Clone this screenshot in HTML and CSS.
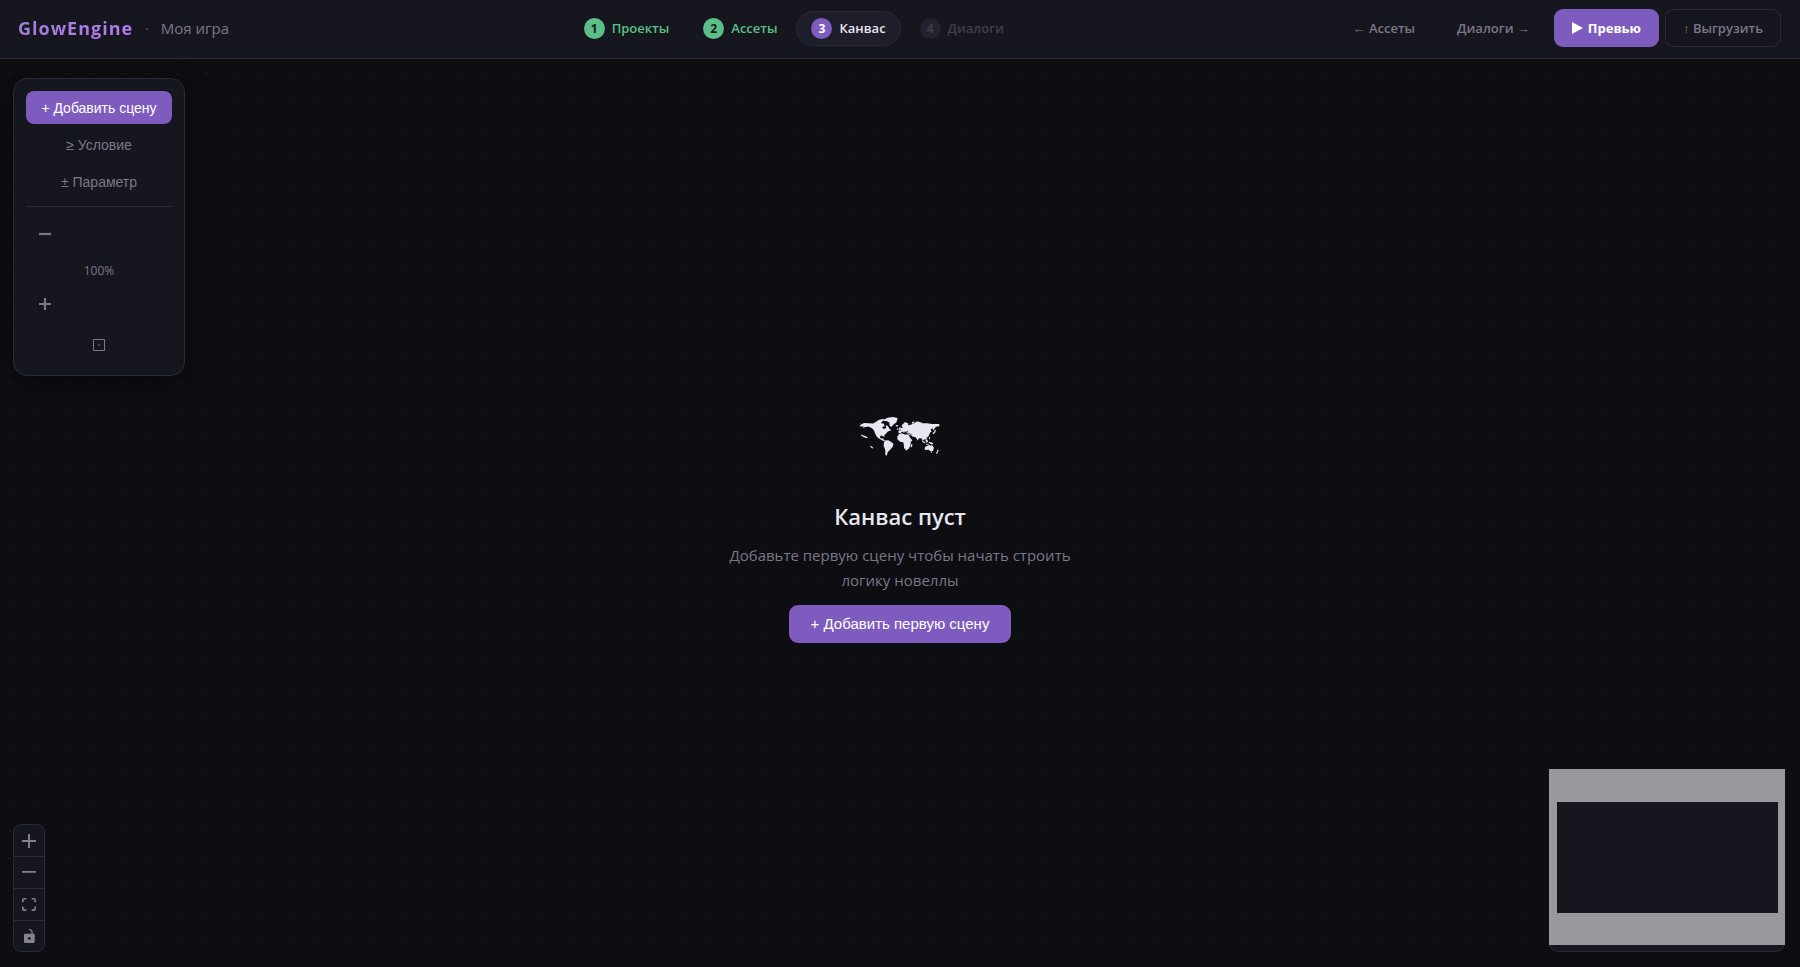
FILE: index.html
```html
<!DOCTYPE html>
<html lang="ru">
<head>
<meta charset="utf-8">
<title>GlowEngine</title>
<link rel="stylesheet" href="styles.css">
</head>
<body>
<header class="topbar">
  <div class="brand">
    <span class="logo">GlowEngine</span>
    <span class="dot">·</span>
    <span class="project">Моя игра</span>
  </div>
  <nav class="steps">
    <button class="step done"><span class="num">1</span>Проекты</button>
    <button class="step done"><span class="num">2</span>Ассеты</button>
    <button class="step active"><span class="num">3</span>Канвас</button>
    <button class="step locked"><span class="num">4</span>Диалоги</button>
  </nav>
  <div class="actions">
    <button class="action">← Ассеты</button>
    <button class="action">Диалоги →</button>
    <button class="action primary"><svg class="play" viewBox="0 0 11 12"><path d="M0 0L11 6L0 12z"/></svg>Превью</button>
    <button class="action outline">↑ Выгрузить</button>
  </div>
</header>
<main class="canvas">
  <section class="empty">
    <svg class="map" viewBox="57 48 248 124" aria-hidden="true">
      <path d="M57 70L64 73L70 69L86 70L98 71L106 66L116 59L127 57L134 60L126 64L122 70L130 71L133 78L125 82L130 87L138 84L136 76L143 78L147 86L153 91L143 95L138 100L132 106L132 112L127 108L120 108L119 114L124 117L129 115L131 121L136 122L134 125L126 122L116 116L109 110L104 101L101 92L95 85L84 80L75 81L66 84L70 80L60 80L57 77L63 75z"/>
      <path d="M130 59L142 53L158 51L172 54L171 61L168 68L160 74L153 81L148 77L147 68L141 64L132 63z"/>
      <path d="M166 76L173 75L174 79L168 80z"/>
      <path d="M135 122L144 121L153 127L160 133L157 142L149 151L142 158L140 168L135 165L135 151L130 138L131 128z"/>
      <path d="M176 103L184 100L194 104L205 104L210 114L217 121L212 127L211 137L206 147L198 152L192 145L190 128L180 126L172 119L171 111z"/>
      <path d="M212 135L217 132L216 141L212 143z"/>
      <path d="M174 98L176 91L182 92L182 85L189 82L184 79L187 73L197 68L205 71L204 77L214 74L223 69L230 65L240 66L248 70L262 70L276 72L298 72L299 79L291 80L284 84L282 92L278 86L272 88L275 95L269 101L266 109L260 114L261 120L253 118L249 123L244 115L237 115L233 122L227 112L219 111L211 106L204 103L199 99L190 99L186 96L181 101z"/>
      <path d="M176 84L181 81L182 89L177 91zM171 86L175 85L174 89L170 90zM216 67L223 64L221 69L215 72zM190 69L197 66L198 69L192 72z"/>
      <path d="M278 100L283 95L285 89L288 91L286 98L280 103zM246 121L252 125L258 131L252 130L246 125zM256 120L263 120L264 127L259 129zM268 111L271 113L270 119L267 116zM266 126L276 128L281 132L275 134L267 130zM258 132L267 133L266 135L258 134z"/>
      <path d="M256 141L264 137L269 136L273 139L276 135L282 144L280 153L272 155L266 150L255 151L254 145zM273 156L277 156L276 159L273 159z"/>
      <path d="M293 149L297 152L294 156L292 163L288 160L291 156z"/>
      <path d="M61 104L72 108L82 112L81 115L70 112L62 107zM89 137L95 140L99 145L95 146L91 142z"/>
      <path class="cut" d="M183 98L194 97L205 100L216 106M193 98L204 94M271 99L280 96"/>
    </svg>
    <h1>Канвас пуст</h1>
    <p>Добавьте первую сцену чтобы начать строить логику новеллы</p>
    <button class="add-first">+ Добавить первую сцену</button>
  </section>

  <aside class="tools">
    <button class="tool add">+ Добавить сцену</button>
    <button class="tool">≥ Условие</button>
    <button class="tool">± Параметр</button>
    <hr>
    <button class="tool zoom" aria-label="Уменьшить"><svg viewBox="0 0 11 11"><path d="M0 5.5H11"/></svg></button>
    <span class="level">100%</span>
    <button class="tool zoom" aria-label="Увеличить"><svg viewBox="0 0 11 11"><path d="M0 5.5H11M5.5 0V11"/></svg></button>
    <button class="tool fit" aria-label="Вписать"><svg viewBox="0 0 12 12"><path d="M.5 .5H11.5V11.5H.5zM5 6H7"/></svg></button>
  </aside>

  <div class="controls">
    <button aria-label="Приблизить"><svg viewBox="0 0 32 32"><path d="M32 18.133H18.133V32h-4.266V18.133H0v-4.266h13.867V0h4.266v13.867H32z"/></svg></button>
    <button aria-label="Отдалить"><svg viewBox="0 0 32 5"><path d="M0 0h32v4.2H0z"/></svg></button>
    <button aria-label="Показать всё"><svg viewBox="0 0 32 30"><path d="M3.692 4.63c0-.53.4-.938.939-.938h5.215V0H4.708C2.13 0 0 2.054 0 4.63v5.216h3.692V4.631zM27.354 0h-5.2v3.692h5.17c.53 0 .984.4.984.939v5.215H32V4.631A4.624 4.624 0 0027.354 0zm.954 24.83c0 .532-.4.94-.939.94h-5.215v3.768h5.215c2.577 0 4.631-2.13 4.631-4.707v-5.139h-3.692v5.139zm-23.677.94c-.531 0-.939-.4-.939-.94v-5.138H0v5.139c0 2.577 2.13 4.707 4.708 4.707h5.138V25.77H4.631z"/></svg></button>
    <button aria-label="Блокировка"><svg class="lock" viewBox="0 0 25 32"><path d="M21.333 10.667H19.81V7.619C19.81 3.429 16.38 0 12.19 0c-4.114 1.828-1.37 2.133.305 2.438 1.676.305 4.42 2.59 4.42 5.181v3.048H3.047A3.056 3.056 0 000 13.714v15.238A3.056 3.056 0 003.048 32h18.285a3.056 3.056 0 003.048-3.048V13.714a3.056 3.056 0 00-3.048-3.047zM12.19 24.533a3.056 3.056 0 01-3.047-3.047 3.056 3.056 0 013.047-3.048 3.056 3.056 0 013.048 3.048 3.056 3.056 0 01-3.048 3.047z"/></svg></button>
  </div>

  <div class="minimap">
    <svg viewBox="0 0 236 176"><path d="M0 0H236V176H0zM8 33V144H229V33z"/></svg>
  </div>
</main>
</body>
</html>
```
FILE: styles.css
```css
:root {
  --bg: #0d0d12;
  --surface: #16161f;
  --border: #2a2a3a;
  --muted: #7a7888;
  --text: #e8e6f0;
  --accent: #7e5cbf;
  --green: #5dbe8a;
  --ui: "Open Sans", "Noto Sans", sans-serif;
  --control: "Liberation Sans", Arial, sans-serif;
}
* { box-sizing: border-box; }
body {
  margin: 0;
  height: 100vh;
  display: flex;
  flex-direction: column;
  background: var(--bg);
  color: var(--text);
  font-family: var(--ui);
}
button {
  border: 0;
  padding: 0;
  background: none;
  color: inherit;
  font: inherit;
  cursor: pointer;
}
svg { display: block; fill: currentColor; }

.topbar {
  display: flex;
  justify-content: space-between;
  align-items: center;
  height: 59px;
  padding: 0 19px 2px 18px;
  background: var(--surface);
  border-bottom: 1px solid var(--border);
}
.brand { display: flex; align-items: center; gap: 12px; padding-right: 24px; }
.logo {
  font-size: 18px;
  font-weight: 700;
  letter-spacing: 1px;
  background: linear-gradient(90deg, #9f7fdc, #b57bee);
  -webkit-background-clip: text;
  background-clip: text;
  color: transparent;
}
.dot { color: #55536a; font-size: 14px; }
.project { color: var(--muted); font-size: 15px; }

.steps { display: flex; gap: 4px; }
.step {
  display: flex;
  align-items: center;
  gap: 7px;
  height: 35px;
  padding: 0 14px;
  border: 1px solid transparent;
  border-radius: 18px;
  font-size: 13px;
  font-weight: 600;
}
.num {
  display: grid;
  place-items: center;
  width: 21px;
  height: 21px;
  border-radius: 50%;
  font-size: 12px;
  font-weight: 700;
}
.done { color: var(--green); }
.done .num { background: var(--green); color: #10201a; }
.active { background: #1e1d2a; border-color: var(--border); }
.active .num { background: var(--accent); color: #fff; }
.locked { color: #413f4e; }
.locked .num { background: #24222f; }

.actions { display: flex; justify-content: flex-end; gap: 6px; }
.action {
  display: flex;
  align-items: center;
  gap: 5px;
  height: 38px;
  padding: 0 17px;
  border: 1px solid transparent;
  border-radius: 9px;
  color: var(--muted);
  font-size: 13px;
  font-weight: 600;
  white-space: nowrap;
}
.action.primary { background: var(--accent); color: #fff; font-weight: 700; }
.action.outline { border-color: var(--border); }
.play { width: 11px; height: 12px; }

.canvas {
  position: relative;
  flex: 1;
  display: grid;
  place-items: center;
  background: radial-gradient(circle at 14px 14px, #181820 1px, transparent 1px) 24px 1px / 28px 28px;
}
.empty {
  display: flex;
  flex-direction: column;
  align-items: center;
  width: 360px;
  text-align: center;
}
.map { width: 83px; height: 41px; margin: 32px 0; overflow: visible; }
.cut { fill: none; stroke: var(--bg); stroke-width: 2; }
.empty h1 {
  margin: 11px 0;
  font-size: 22px;
  line-height: 32px;
  font-weight: 600;
}
.empty p {
  margin: 0 0 12px;
  color: var(--muted);
  font-size: 15px;
  line-height: 25px;
}
.add-first {
  height: 38px;
  padding: 0 22px;
  border-radius: 9px;
  background: var(--accent);
  color: #fff;
  font-family: var(--control);
  font-size: 15px;
}

.tools {
  position: absolute;
  left: 13px;
  top: 19px;
  display: flex;
  flex-direction: column;
  gap: 4px;
  width: 172px;
  padding: 12px;
  border: 1px solid var(--border);
  border-radius: 14px;
  background: var(--surface);
  box-shadow: 0 4px 24px rgba(0, 0, 0, .4);
  color: var(--muted);
}
.tool {
  height: 33px;
  border-radius: 8px;
  font-family: var(--control);
  font-size: 14px;
}
.tool.add { background: var(--accent); color: #fff; }
.tools hr {
  width: 100%;
  height: 1px;
  margin: 4px 0;
  border: 0;
  background: var(--border);
}
.tool.zoom { height: 38px; padding: 0 13px; }
.tool.fit { display: grid; place-items: center; height: 36px; }
.tool svg { width: 12px; height: 12px; fill: none; stroke: currentColor; stroke-width: 1; }
.tool.zoom svg { stroke-width: 2; }
.level { padding-top: 4px; font-size: 12px; line-height: 20px; text-align: center; }

.controls {
  position: absolute;
  left: 13px;
  bottom: 15px;
  display: flex;
  flex-direction: column;
  width: 32px;
  border: 1px solid var(--border);
  border-radius: 8px;
  overflow: hidden;
  background: var(--surface);
  color: #85838f;
}
.controls button {
  display: grid;
  place-items: center;
  height: 32px;
  border-bottom: 1px solid var(--border);
}
.controls button:last-child { border-bottom: 0; height: 30px; }
.controls svg { width: 14px; }
.controls .lock { width: 11px; }

.minimap {
  position: absolute;
  right: 15px;
  bottom: 15px;
  width: 236px;
  padding-bottom: 7px;
  border-radius: 0 0 9px 9px;
  background: var(--surface);
  box-shadow: inset 0 0 0 1px var(--border);
  color: #99989d;
}
.minimap svg { width: 100%; fill-rule: evenodd; }
```
